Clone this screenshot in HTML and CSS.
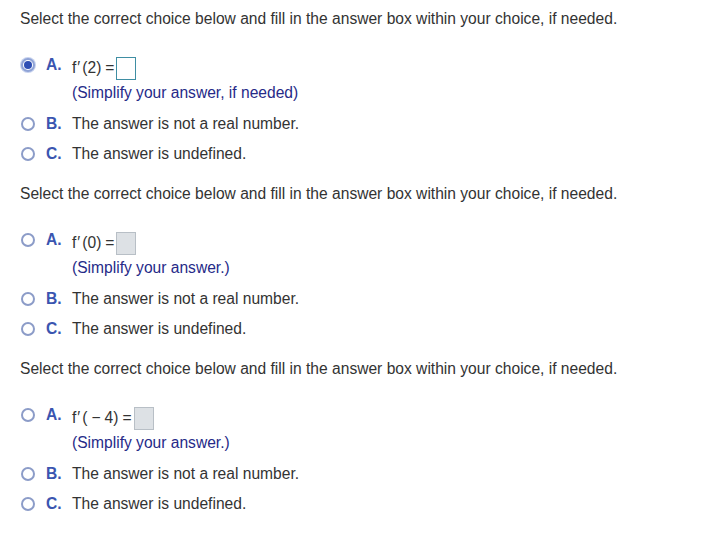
FILE: index.html
```html
<!DOCTYPE html>
<html lang="en">
<head>
    <meta charset="UTF-8">
    <title>Choices</title>
    <link rel="stylesheet" href="styles.css">
</head>
<body>

<!-- Part 1 -->
<section class="question">
    <p class="prompt">Select the correct choice below and fill in the answer box within your choice, if needed.</p>
    <ul class="choices">
        <li class="choice">
            <span class="radio checked"></span>
            <span class="letter">A.</span>
            <div class="body">
                <div class="expr">f<span class="prime">&#8242;</span>(2)<span class="eq">=</span><span class="answer active"></span></div>
                <div class="hint">(Simplify your answer, if needed)</div>
            </div>
        </li>
        <li class="choice">
            <span class="radio"></span>
            <span class="letter">B.</span>
            <div class="body">The answer is not a real number.</div>
        </li>
        <li class="choice">
            <span class="radio"></span>
            <span class="letter">C.</span>
            <div class="body">The answer is undefined.</div>
        </li>
    </ul>
</section>

<!-- Part 2 -->
<section class="question">
    <p class="prompt">Select the correct choice below and fill in the answer box within your choice, if needed.</p>
    <ul class="choices">
        <li class="choice">
            <span class="radio"></span>
            <span class="letter">A.</span>
            <div class="body">
                <div class="expr">f<span class="prime">&#8242;</span>(0)<span class="eq">=</span><span class="answer"></span></div>
                <div class="hint">(Simplify your answer.)</div>
            </div>
        </li>
        <li class="choice">
            <span class="radio"></span>
            <span class="letter">B.</span>
            <div class="body">The answer is not a real number.</div>
        </li>
        <li class="choice">
            <span class="radio"></span>
            <span class="letter">C.</span>
            <div class="body">The answer is undefined.</div>
        </li>
    </ul>
</section>

<!-- Part 3 -->
<section class="question">
    <p class="prompt">Select the correct choice below and fill in the answer box within your choice, if needed.</p>
    <ul class="choices">
        <li class="choice">
            <span class="radio"></span>
            <span class="letter">A.</span>
            <div class="body">
                <div class="expr">f<span class="prime">&#8242;</span>(<span class="minus">&#8722;</span>4)<span class="eq">=</span><span class="answer"></span></div>
                <div class="hint">(Simplify your answer.)</div>
            </div>
        </li>
        <li class="choice">
            <span class="radio"></span>
            <span class="letter">B.</span>
            <div class="body">The answer is not a real number.</div>
        </li>
        <li class="choice">
            <span class="radio"></span>
            <span class="letter">C.</span>
            <div class="body">The answer is undefined.</div>
        </li>
    </ul>
</section>

</body>
</html>
```

FILE: styles.css
```css
body {
    font-family: "Liberation Sans", Arial, sans-serif;
    font-size: 15.6px;
    color: #333;
    background-color: #fff;
    margin: 0;
    padding: 9px 20px 0;
}

.question {
    height: 175px;
}

.prompt {
    margin: 0;
    line-height: 20px;
}

.choices {
    list-style: none;
    margin: 0;
    padding: 26px 0 0;
}

.choice {
    display: flex;
    align-items: flex-start;
    margin-bottom: 10px;
    line-height: 20px;
}

.radio {
    width: 10px;
    height: 10px;
    border: 2px solid #8c9cc8;
    border-radius: 50%;
    margin: 3px 11px 0 1px;
    flex-shrink: 0;
    box-sizing: content-box;
    position: relative;
}

.radio.checked {
    border-color: #8fa3d6;
    background-color: #fff;
    box-shadow: 0 0 0 1px #c7d2ee;
}

.radio.checked::after {
    content: "";
    position: absolute;
    left: 1px;
    top: 1px;
    width: 8px;
    height: 8px;
    border-radius: 50%;
    background-color: #2f4fb4;
}

.letter {
    width: 26px;
    font-weight: bold;
    color: #3a55b0;
    flex-shrink: 0;
}

.expr {
    display: flex;
    align-items: center;
    height: 24px;
    margin-top: 1px;
}

.prime {
    margin: 0 2px 0 1px;
}

.eq {
    margin: 0 2px 0 4px;
}

.minus {
    margin: 0 4px;
}

.answer {
    display: inline-block;
    width: 18px;
    height: 21px;
    border: 1px solid #b8bfc6;
    background-color: #dde1e5;
}

.answer.active {
    border-color: #3f8ea3;
    background-color: #fff;
}

.hint {
    color: #262a88;
    margin: 3px 0 1px;
}
```
